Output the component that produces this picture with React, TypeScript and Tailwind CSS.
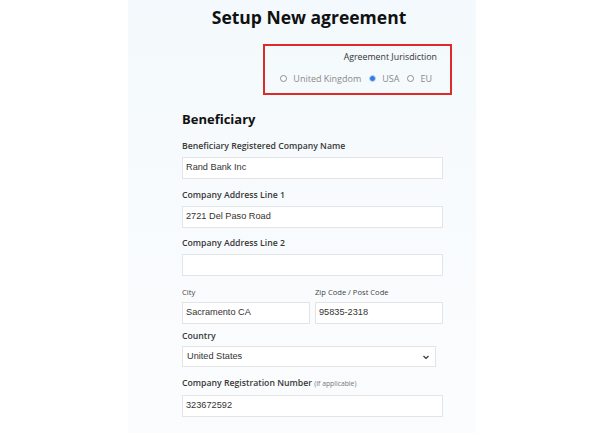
import React from 'react';

const labelFont = { fontFamily: '"Open Sans", "Noto Sans", sans-serif' };

interface FieldProps {
  label: React.ReactNode;
  value?: string;
  className?: string;
}

const inputText = "text-[9.2px] text-[#333] font-['Liberation_Sans',Arial,sans-serif]";

const TextField: React.FC<FieldProps> = ({ label, value = '', className = '' }) => (
  <div className={className}>
    <div className="text-[8.7px] leading-[14px] font-semibold text-[#383838] mb-1">{label}</div>
    <div className={`h-[22px] w-[261px] border border-[#e2e4e6] bg-white flex items-center px-[3px] ${inputText}`}>
      {value}
    </div>
  </div>
);

const Radio: React.FC<{ label: string; checked?: boolean }> = ({ label, checked = false }) => (
  <div className="flex items-center gap-[6px]">
    {checked ? (
      <span className="w-[5px] h-[5px] rounded-full bg-[#2f7de1] border-[1.5px] border-[#c2daf6] box-content" />
    ) : (
      <span className="w-[7px] h-[7px] rounded-full border border-[#8c8c8c] bg-white" />
    )}
    <span className="text-[9px] text-[#8a8a8a]">{label}</span>
  </div>
);

export default function App() {
  return (
    <div className="w-[600px] h-[433px] bg-white overflow-hidden" style={labelFont}>
      <div className="ml-[128px] w-[348px] h-[433px] bg-gradient-to-b from-[#f3f9fc] via-[#f8fbfd] to-[#fbfcfe]">
        {/* Title */}
        <div className="pl-[14px] pt-[3px] text-center text-[17.5px] leading-[28px] font-bold text-[#111]">
          Setup New agreement
        </div>

        {/* Jurisdiction box */}
        <div className="mt-[13px] ml-[135px] w-[189px] h-[51px] border-2 border-[#dd2a2a] flex flex-col items-end pr-[13px]">
          <div className="mt-[4px] text-[8.8px] leading-[14px] text-[#333]">Agreement Jurisdiction</div>
          <div className="mt-[8px] mr-[5px] flex items-center gap-[8px]">
            <Radio label="United Kingdom" />
            <Radio label="USA" checked />
            <Radio label="EU" />
          </div>
        </div>

        {/* Beneficiary form */}
        <div className="ml-[54px] w-[261px]">
          <div className="mt-[14px] text-[13px] leading-[20px] font-bold text-[#111]">Beneficiary</div>

          <TextField className="mt-[10px]" label="Beneficiary Registered Company Name" value="Rand Bank Inc" />
          <TextField className="mt-[9px]" label="Company Address Line 1" value="2721 Del Paso Road" />
          <TextField className="mt-[8px]" label="Company Address Line 2" />

          <div className="mt-[10px] flex gap-[5px]">
            <div className="w-[128px]">
              <div className="text-[7.6px] leading-[12px] text-[#444] mb-1">City</div>
              <div className={`h-[22px] border border-[#e2e4e6] bg-white flex items-center px-[3px] ${inputText}`}>
                Sacramento CA
              </div>
            </div>
            <div className="w-[128px]">
              <div className="text-[7.6px] leading-[12px] text-[#444] mb-1">Zip Code / Post Code</div>
              <div className={`h-[22px] border border-[#e2e4e6] bg-white flex items-center px-[3px] ${inputText}`}>
                95835-2318
              </div>
            </div>
          </div>

          <div className="mt-[5px]">
            <div className="text-[8.7px] leading-[14px] font-semibold text-[#383838] mb-[3px]">Country</div>
            <div className={`h-[21px] w-[254px] border border-[#e2e4e6] bg-white flex items-center justify-between px-[4px] ${inputText}`}>
              <span>United States</span>
              <svg width="8" height="8" viewBox="0 0 8 8" className="mr-[1px]">
                <path d="M1.5 3 L4 5.5 L6.5 3" fill="none" stroke="#333" strokeWidth="1.2" />
              </svg>
            </div>
          </div>

          <TextField
            className="mt-[9px]"
            label={
              <>
                Company Registration Number{' '}
                <span className="text-[6.8px] font-normal text-[#777]">(If applicable)</span>
              </>
            }
            value="323672592"
          />
        </div>
      </div>
    </div>
  );
}
